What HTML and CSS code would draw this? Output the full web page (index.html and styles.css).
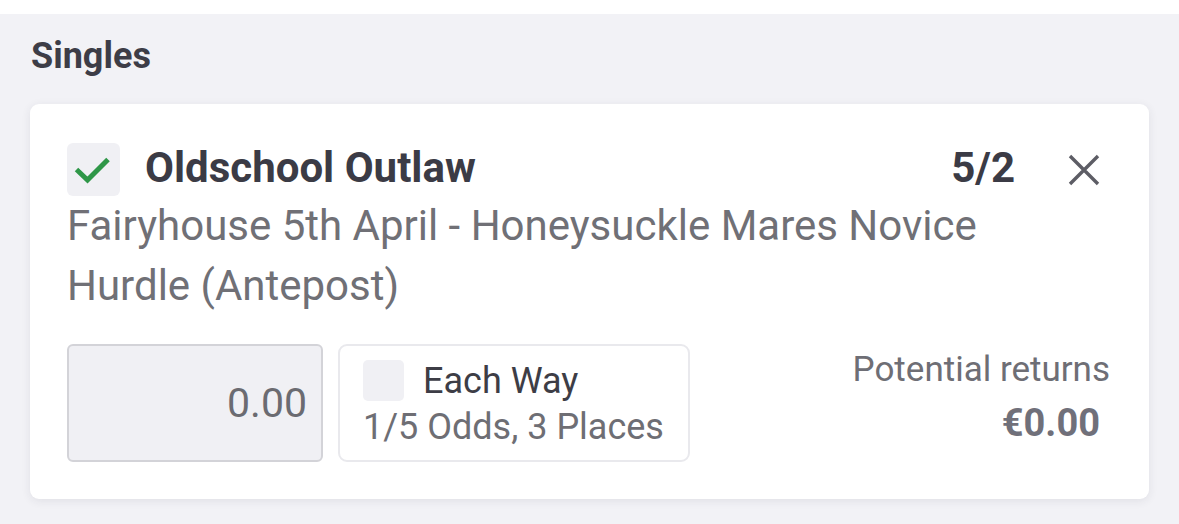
FILE: index.html
```html
<!DOCTYPE html>
<html lang="en">
<head>
<meta charset="utf-8">
<title>Betslip - Singles</title>
<link rel="stylesheet" href="styles.css">
</head>
<body>
<div class="topbar"></div>
<section class="singles">
  <h2 class="section-title">Singles</h2>
  <div class="card">
    <div class="title-row">
      <span class="check">
        <svg width="53" height="53" viewBox="0 0 53 53"><path d="M9.5 26.5 L20.5 37 L41 16.5" fill="none" stroke="#2f9748" stroke-width="5" stroke-linecap="butt" stroke-linejoin="miter"/></svg>
      </span>
      <span class="selection">Oldschool Outlaw</span>
      <span class="odds">5/2</span>
      <span class="close">
        <svg width="32" height="32" viewBox="0 0 32 32"><path d="M2 2 L30 30 M30 2 L2 30" fill="none" stroke="#5d5d65" stroke-width="3.4"/></svg>
      </span>
    </div>
    <p class="market">Fairyhouse 5th April - Honeysuckle Mares Novice Hurdle (Antepost)</p>
    <div class="bet-row">
      <div class="stake">0.00</div>
      <div class="eachway">
        <div class="ew-top">
          <span class="ew-box"></span>
          <span class="ew-label">Each Way</span>
        </div>
        <div class="ew-terms">1/5 Odds, 3 Places</div>
      </div>
      <div class="returns">
        <div class="returns-label">Potential returns</div>
        <div class="returns-value">€0.00</div>
      </div>
    </div>
  </div>
</section>
</body>
</html>
```
FILE: styles.css
```css
* { box-sizing: border-box; }
html, body {
  margin: 0;
  padding: 0;
}
body {
  background: #f2f2f6;
  font-family: Roboto, "Liberation Sans", Arial, sans-serif;
  width: 1179px;
  height: 524px;
  overflow: hidden;
}
.topbar {
  height: 14px;
  background: #ffffff;
}
.singles {
  padding: 21px 30px 0 30px;
}
.section-title {
  margin: 0 0 27px 0;
  padding-left: 1px;
  font-size: 36px;
  line-height: 42px;
  font-weight: 700;
  color: #3d3d47;
}
.card {
  background: #ffffff;
  border-radius: 9px;
  box-shadow: 0 2px 10px rgba(40, 40, 70, 0.09);
  padding: 39px 37px 37px 37px;
}
.title-row {
  display: flex;
  align-items: center;
  height: 53px;
}
.check {
  width: 53px;
  height: 53px;
  border-radius: 6px;
  background: #f0f0f4;
  flex: none;
  display: flex;
}
.selection {
  margin-left: 25px;
  font-size: 42px;
  font-weight: 700;
  line-height: 49px;
  color: #3b3b45;
  flex: 1;
  padding-bottom: 4px;
}
.odds {
  font-size: 42px;
  font-weight: 700;
  line-height: 49px;
  color: #3b3b45;
  padding-bottom: 4px;
}
.close {
  margin-left: 53px;
  margin-right: 12px;
  width: 32px;
  height: 32px;
  display: flex;
}
.market {
  margin: 0;
  font-size: 42px;
  line-height: 60px;
  color: #707076;
  max-width: 1010px;
}
.bet-row {
  margin-top: 28px;
  display: flex;
  align-items: flex-start;
}
.stake {
  width: 256px;
  height: 118px;
  background: #f0f0f4;
  border: 2px solid #d3d3d8;
  border-radius: 6px;
  display: flex;
  align-items: center;
  justify-content: flex-end;
  padding-right: 14px;
  font-size: 41px;
  color: #6b6b71;
}
.eachway {
  margin-left: 15px;
  width: 352px;
  height: 118px;
  border: 2px solid #e9e9ed;
  border-radius: 9px;
  padding: 14px 23px 13px 23px;
}
.ew-top {
  display: flex;
  align-items: center;
  height: 41px;
}
.ew-box {
  width: 41px;
  height: 41px;
  border-radius: 5px;
  background: #f0f0f4;
}
.ew-label {
  margin-left: 19px;
  font-size: 36px;
  line-height: 40px;
  color: #3d3d46;
}
.ew-terms {
  margin-top: 5px;
  font-size: 36px;
  line-height: 42px;
  color: #6e6e74;
}
.returns {
  margin-left: auto;
  margin-top: 5px;
  text-align: right;
  padding-right: 2px;
}
.returns-label {
  font-size: 35px;
  line-height: 42px;
  color: #6e6e75;
}
.returns-value {
  margin-top: 8px;
  margin-right: 10px;
  font-size: 38px;
  line-height: 48px;
  font-weight: 700;
  color: #70707a;
}
```
